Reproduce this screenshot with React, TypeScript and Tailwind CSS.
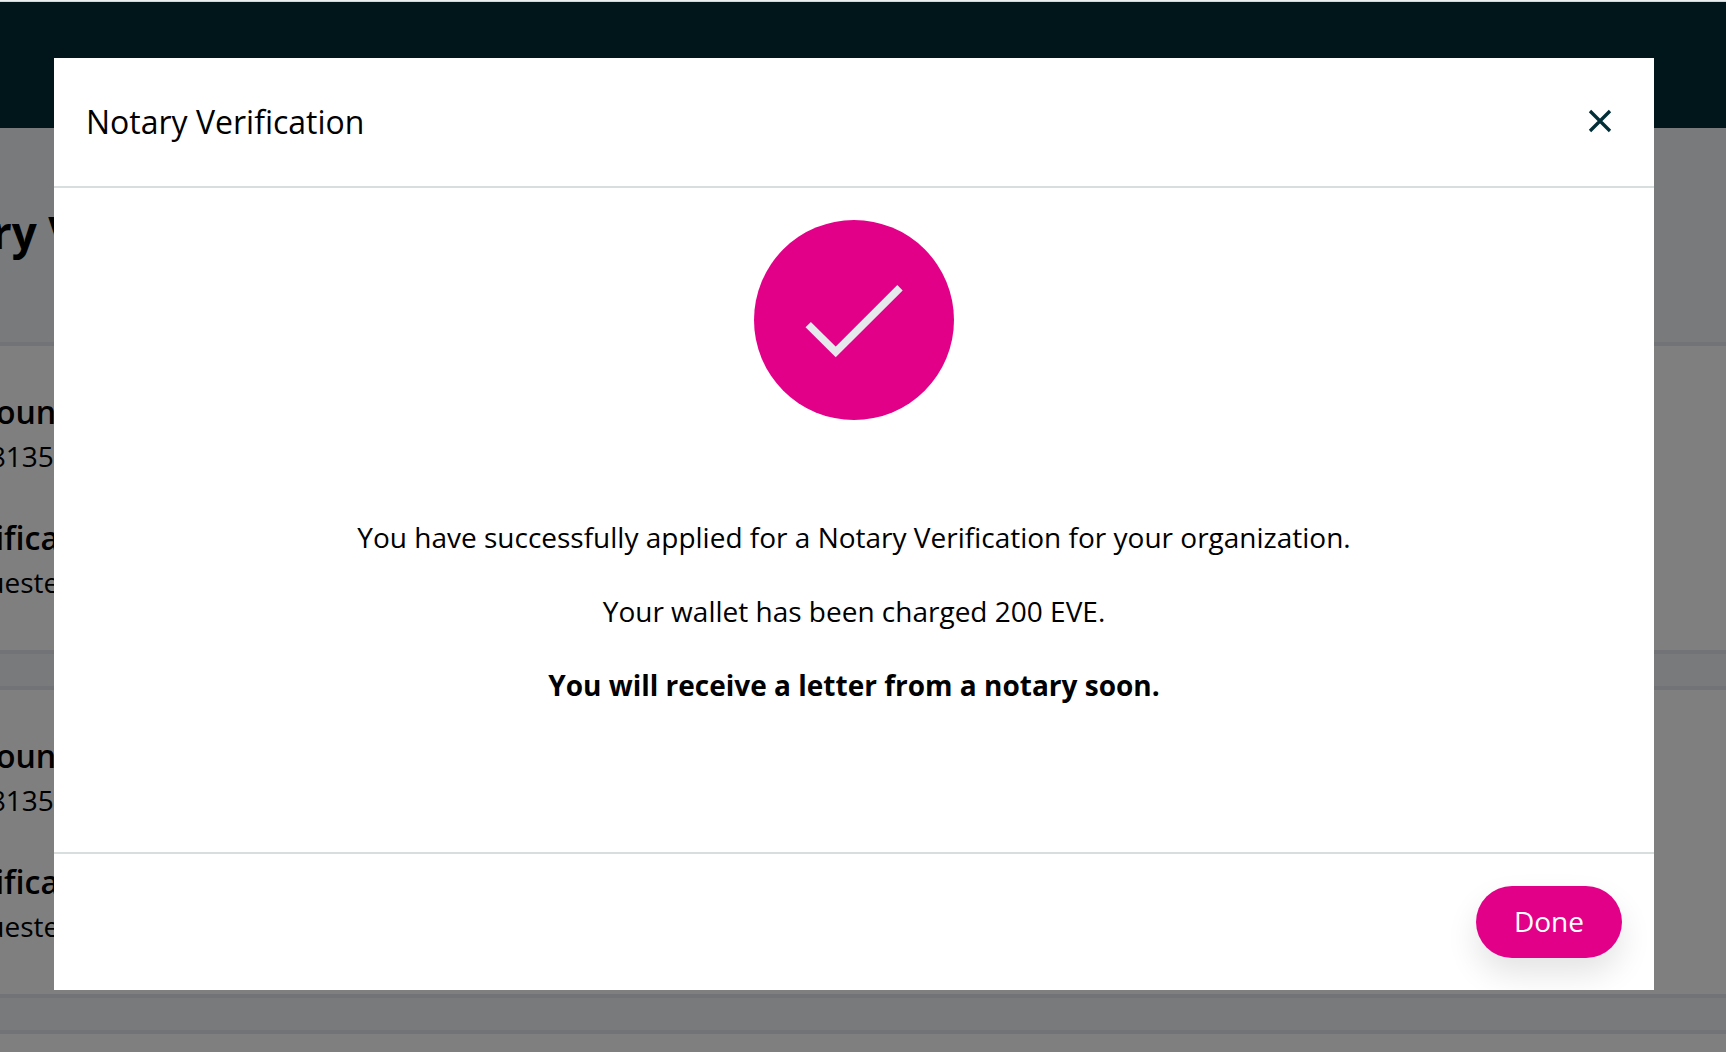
const ACCOUNTS = [
  { id: 1, account: '0x08135', status: 'requested' },
  { id: 2, account: '0x08135', status: 'requested' },
  { id: 3, account: '0x08135', status: 'requested' },
];

function RequestCard({ account, status }: { account: string; status: string }) {
  return (
    <section className="border-y-4 border-[#e2e6ee] bg-white pt-11 pb-[46px]">
      <dl className="-ml-[57px] flex flex-col gap-[38px]">
        <div>
          <dt className="text-[32px] leading-[44px] font-semibold">Account</dt>
          <dd className="text-[28px] leading-[44px]">{account}</dd>
        </div>
        <div>
          <dt className="text-[32px] leading-[44px] font-semibold">Verification</dt>
          <dd className="text-[28px] leading-[44px]">{status}</dd>
        </div>
      </dl>
    </section>
  );
}

function SuccessIcon() {
  return (
    <svg viewBox="0 0 200 200" className="size-[200px]" aria-hidden="true">
      <circle cx="100" cy="100" r="100" fill="#e20089" />
      <path d="M54.2 104.6 81.7 132 146 67.7" fill="none" stroke="#e5e9ec" strokeWidth="7.6" />
    </svg>
  );
}

function CloseIcon() {
  return (
    <svg viewBox="0 0 24 24" className="size-6 overflow-visible" aria-hidden="true">
      <path d="M2 1 22 21M22 1 2 21" fill="none" stroke="#022e38" strokeWidth="3.3" />
    </svg>
  );
}

export default function App() {
  return (
    <div className="h-screen overflow-hidden border-t border-[#eceff0] bg-[#f3f5f7] font-['Open_Sans',sans-serif] text-black">
      <header className="h-[127px] border-t border-[#d0d8da] bg-[#002c34]" />
      <main>
        <h1 className="-ml-[117px] pt-[74px] pb-20 text-[44px] leading-[60px] font-bold">
          Notary Verification
        </h1>
        <div className="flex flex-col gap-8">
          {ACCOUNTS.map((item) => (
            <RequestCard key={item.id} account={item.account} status={item.status} />
          ))}
        </div>
      </main>

      <div className="fixed inset-x-0 top-0.5 bottom-0 bg-black/50 pt-14 pr-[72px] pl-[54px]">
        <div role="dialog" aria-modal="true" aria-labelledby="dialog-title" className="overflow-hidden bg-white">
          <div className="flex items-center justify-between border-b-2 border-[#d8dddd] px-8 py-[42px]">
            <h2 id="dialog-title" className="text-[32px] leading-[44px]">
              Notary Verification
            </h2>
            <button type="button" aria-label="Close" className="flex size-11 items-center justify-center">
              <CloseIcon />
            </button>
          </div>
          <div className="flex flex-col items-center px-8 pt-8 pb-[146px] text-center text-[28px] leading-[42px]">
            <SuccessIcon />
            <div className="mt-24 flex flex-col gap-8">
              <p>You have successfully applied for a Notary Verification for your organization.</p>
              <p>Your wallet has been charged 200 EVE.</p>
              <p className="font-bold">You will receive a letter from a notary soon.</p>
            </div>
          </div>
          <div className="flex justify-end border-t-2 border-[#d8dddd] p-8">
            <button
              type="button"
              className="rounded-full bg-[#e20089] px-[38px] pt-[15px] pb-[17px] text-[28px] leading-[40px] text-white shadow-[0_16px_32px_rgba(0,0,0,0.11)]"
            >
              Done
            </button>
          </div>
        </div>
      </div>
    </div>
  );
}
